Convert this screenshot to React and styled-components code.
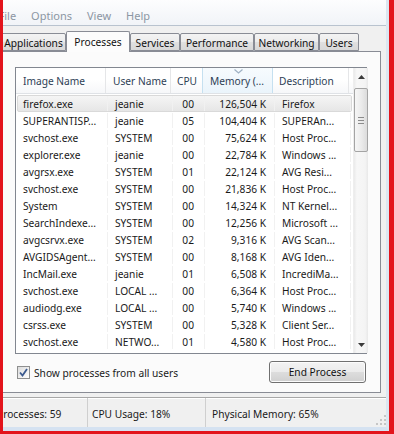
import React from 'react';
import styled, { createGlobalStyle } from 'styled-components';

const GlobalStyle = createGlobalStyle`
  html, body {
    margin: 0;
    padding: 0;
    background: #ffffff;
  }
  body {
    font-family: "Noto Sans", "Open Sans", sans-serif;
    font-size: 10.2px;
    color: #1a1a1a;
  }
`;

const processes = [
  ['firefox.exe', 'jeanie', '00', '126,504 K', 'Firefox'],
  ['SUPERANTISP...', 'jeanie', '05', '104,404 K', 'SUPERAn...'],
  ['svchost.exe', 'SYSTEM', '00', '75,624 K', 'Host Proc...'],
  ['explorer.exe', 'jeanie', '00', '22,784 K', 'Windows ...'],
  ['avgrsx.exe', 'SYSTEM', '01', '22,124 K', 'AVG Resi...'],
  ['svchost.exe', 'SYSTEM', '00', '21,836 K', 'Host Proc...'],
  ['System', 'SYSTEM', '00', '14,324 K', 'NT Kernel...'],
  ['SearchIndexe...', 'SYSTEM', '00', '12,256 K', 'Microsoft ...'],
  ['avgcsrvx.exe', 'SYSTEM', '02', '9,316 K', 'AVG Scan...'],
  ['AVGIDSAgent...', 'SYSTEM', '00', '8,168 K', 'AVG Iden...'],
  ['IncMail.exe', 'jeanie', '01', '6,508 K', 'IncrediMa...'],
  ['svchost.exe', 'LOCAL ...', '00', '6,364 K', 'Host Proc...'],
  ['audiodg.exe', 'LOCAL ...', '00', '5,740 K', 'Windows ...'],
  ['csrss.exe', 'SYSTEM', '00', '5,328 K', 'Client Ser...'],
  ['svchost.exe', 'NETWO...', '01', '4,580 K', 'Host Proc...'],
];

const tabs = [
  { label: 'Applications', width: 65 },
  { label: 'Processes', width: 64, active: true },
  { label: 'Services', width: 50 },
  { label: 'Performance', width: 74 },
  { label: 'Networking', width: 65 },
  { label: 'Users', width: 40 },
];

const COLS = '90px 65px 32px 70px 76px';

const Window = styled.div`
  width: 394px;
  height: 434px;
  box-sizing: border-box;
  border-left: 3px solid #e3141c;
  border-right: 5px solid #e3141c;
  border-bottom: 3px solid #e3141c;
`;

const Client = styled.div`
  height: 100%;
  box-sizing: border-box;
  background: #f0f0f0;
  border-right: 3px solid #dce6f1;
  border-bottom: 4px solid #d5e2f1;
  display: flex;
  flex-direction: column;
  overflow: hidden;
`;

const MenuBar = styled.div`
  height: 26px;
  box-sizing: border-box;
  padding-top: 6px;
  padding-left: 0;
  display: flex;
  align-items: center;
  gap: 15px;
  background: linear-gradient(#fdfdfe, #f1f4f8);
  border-bottom: 1px solid #b9c3cf;
  font-size: 11px;
  color: #8c96a3;
`;

const MenuItem = styled.span`
  margin-left: ${p => (p.first ? '-4.5px' : '0')};
`;

const Body = styled.div`
  margin-left: -2px;
  padding-top: 5px;
  height: 371px;
  box-sizing: border-box;
`;

const TabStrip = styled.div`
  height: 20px;
  display: flex;
  align-items: flex-end;
`;

const Tab = styled.div`
  box-sizing: border-box;
  width: ${p => p.w}px;
  height: ${p => (p.active ? 21 : 18)}px;
  margin-bottom: ${p => (p.active ? -1 : 0)}px;
  position: relative;
  z-index: ${p => (p.active ? 2 : 1)};
  border: 1px solid #898c95;
  border-bottom: ${p => (p.active ? 'none' : '1px solid #898c95')};
  border-radius: 2px 2px 0 0;
  background: ${p =>
    p.active
      ? '#fcfcfc'
      : 'linear-gradient(#f3f3f3 0%, #ececec 50%, #e0e0e0 51%, #d8d8d8 100%)'};
  display: flex;
  align-items: center;
  justify-content: center;
  padding-top: ${p => (p.active ? 0 : 1)}px;
  color: #111;
`;

const Panel = styled.div`
  width: 380px;
  height: 342px;
  box-sizing: border-box;
  border: 1px solid #898c95;
  background: #fbfbfb;
  padding: 15px 13px 9px 13px;
  display: flex;
  flex-direction: column;
`;

const ListView = styled.div`
  height: 287px;
  box-sizing: border-box;
  border: 1px solid #828790;
  background: #ffffff;
  display: flex;
`;

const ListMain = styled.div`
  flex: 1;
  display: flex;
  flex-direction: column;
`;

const Header = styled.div`
  height: 26px;
  box-sizing: border-box;
  display: grid;
  grid-template-columns: ${COLS};
  background: linear-gradient(#ffffff 0%, #ffffff 45%, #f6f7f9 100%);
  border-bottom: 1px solid #dfe2e6;
  color: #2e3e55;
`;

const HeadCell = styled.div`
  position: relative;
  display: flex;
  align-items: center;
  box-sizing: border-box;
  padding-left: ${p => p.pl ?? 7}px;
  padding-top: 1px;
  white-space: nowrap;
  overflow: hidden;
  border-right: 1px solid ${p => (p.sorted ? '#c5e0f0' : '#e5e6e8')};
  border-left: ${p => (p.sorted ? '1px solid #c5e0f0' : 'none')};
  margin-left: ${p => (p.sorted ? -1 : 0)}px;
  background: ${p => (p.sorted ? 'linear-gradient(#f7fbfe, #eaf4fb)' : 'transparent')};
`;

const SortArrow = styled.svg`
  position: absolute;
  top: 1px;
  left: 31px;
`;

const Rows = styled.div`
  flex: 1;
  padding-top: 1px;
`;

const Row = styled.div`
  height: 17px;
  box-sizing: border-box;
  display: grid;
  grid-template-columns: ${COLS};
  align-items: center;
  margin: 0 1px;
  border-radius: 2px;
  border: 1px solid ${p => (p.selected ? '#d9d9d9' : 'transparent')};
  background: ${p => (p.selected ? 'linear-gradient(#f5f5f5, #e6e6e6)' : 'transparent')};
  & > div:first-child {
    margin-left: -2px;
  }
`;

const Cell = styled.div`
  height: 100%;
  box-sizing: border-box;
  display: flex;
  align-items: center;
  justify-content: ${p => (p.right ? 'flex-end' : 'flex-start')};
  padding-left: ${p => (p.right ? 0 : 7)}px;
  padding-right: ${p => p.pr ?? 0}px;
  white-space: nowrap;
  overflow: hidden;
  border-right: 1px solid #f1f1f1;
`;

const ScrollBar = styled.div`
  width: 17px;
  display: flex;
  flex-direction: column;
  background: linear-gradient(90deg, #eaeaea 0%, #f7f7f7 20%, #f4f4f4 80%, #e8e8e8 100%);
  border-left: 1px solid #eeeeee;
  box-sizing: border-box;
`;

const ArrowButton = styled.div`
  height: 17px;
  display: flex;
  align-items: center;
  justify-content: center;
`;

const Track = styled.div`
  flex: 1;
  padding-top: 3px;
  display: flex;
  justify-content: center;
`;

const Thumb = styled.div`
  width: 14px;
  height: 64px;
  box-sizing: border-box;
  border: 1px solid #a4a4a4;
  border-radius: 2px;
  background: linear-gradient(90deg, #f6f6f6 0%, #ececec 50%, #dcdcdc 100%);
  display: flex;
  flex-direction: column;
  align-items: center;
  justify-content: center;
  gap: 2px;
`;

const GripLine = styled.div`
  width: 6px;
  height: 1px;
  background: #8b8b8b;
`;

const Footer = styled.div`
  margin-top: 7px;
  height: 22px;
  display: flex;
  align-items: center;
  justify-content: space-between;
`;

const CheckLabel = styled.label`
  display: flex;
  align-items: center;
  gap: 4px;
  margin-left: 2px;
  margin-top: 1px;
  color: #1a1a1a;
`;

const CheckBox = styled.span`
  width: 13px;
  height: 13px;
  box-sizing: border-box;
  border: 1px solid #8e8f8f;
  background: linear-gradient(135deg, #dcdcdc, #ffffff);
  display: flex;
  align-items: center;
  justify-content: center;
`;

const Button = styled.button`
  width: 97px;
  height: 22px;
  margin-right: 1px;
  box-sizing: border-box;
  border: 1px solid #707070;
  border-radius: 3px;
  background: linear-gradient(#f3f3f3 0%, #ebebeb 50%, #dddddd 51%, #d0d0d0 100%);
  box-shadow: inset 0 0 0 1px #fcfcfc;
  font-family: inherit;
  font-size: 10.2px;
  color: #111;
  padding: 0;
`;

const StatusBar = styled.div`
  height: 30px;
  box-sizing: border-box;
  border-top: 1px solid #a7a7a7;
  box-shadow: inset 0 1px 0 #ffffff;
  display: flex;
  align-items: stretch;
  position: relative;
  color: #1a1a1a;
`;

const StatusCell = styled.div`
  width: ${p => p.w}px;
  box-sizing: border-box;
  padding-left: ${p => p.pl}px;
  padding-top: 3px;
  display: flex;
  align-items: center;
  white-space: nowrap;
  border-right: ${p => (p.last ? 'none' : '1px solid #cfcfcf')};
  text-indent: ${p => p.indent ?? 0}px;
`;

const Gripper = styled.svg`
  position: absolute;
  right: 0;
  bottom: 2px;
`;

function App() {
  return (
    <>
      <GlobalStyle />
      <Window>
        <Client>
          <MenuBar>
            <MenuItem first>File</MenuItem>
            <MenuItem>Options</MenuItem>
            <MenuItem>View</MenuItem>
            <MenuItem>Help</MenuItem>
          </MenuBar>

          <Body>
            <TabStrip>
              {tabs.map(t => (
                <Tab key={t.label} w={t.width} active={t.active}>
                  {t.label}
                </Tab>
              ))}
            </TabStrip>

            <Panel>
              <ListView>
                <ListMain>
                  <Header>
                    <HeadCell>Image Name</HeadCell>
                    <HeadCell>User Name</HeadCell>
                    <HeadCell pl={6}>CPU</HeadCell>
                    <HeadCell sorted pl={7}>
                      <SortArrow width="9" height="5" viewBox="0 0 9 5">
                        <path d="M0.5 0.5 L4.5 4 L8.5 0.5" fill="none" stroke="#9fb1c4" strokeWidth="1.2" />
                      </SortArrow>
                      Memory (...
                    </HeadCell>
                    <HeadCell pl={6}>Description</HeadCell>
                  </Header>
                  <Rows>
                    {processes.map((p, i) => (
                      <Row key={i} selected={i === 0}>
                        <Cell>{p[0]}</Cell>
                        <Cell>{p[1]}</Cell>
                        <Cell right pr={10}>{p[2]}</Cell>
                        <Cell right pr={8}>{p[3]}</Cell>
                        <Cell>{p[4]}</Cell>
                      </Row>
                    ))}
                  </Rows>
                </ListMain>
                <ScrollBar>
                  <ArrowButton>
                    <svg width="7" height="4" viewBox="0 0 7 4">
                      <path d="M0 4 L3.5 0 L7 4 Z" fill="#3a3a3a" />
                    </svg>
                  </ArrowButton>
                  <Track>
                    <Thumb>
                      <GripLine />
                      <GripLine />
                      <GripLine />
                    </Thumb>
                  </Track>
                  <ArrowButton>
                    <svg width="7" height="4" viewBox="0 0 7 4">
                      <path d="M0 0 L3.5 4 L7 0 Z" fill="#3a3a3a" />
                    </svg>
                  </ArrowButton>
                </ScrollBar>
              </ListView>

              <Footer>
                <CheckLabel>
                  <CheckBox>
                    <svg width="9" height="9" viewBox="0 0 9 9">
                      <path d="M1 4.5 L3.5 7.5 L8 1" fill="none" stroke="#3b5a8f" strokeWidth="1.8" />
                    </svg>
                  </CheckBox>
                  Show processes from all users
                </CheckLabel>
                <Button>End Process</Button>
              </Footer>
            </Panel>
          </Body>

          <StatusBar>
            <StatusCell w={85} pl={0} indent={-6}>Processes: 59</StatusCell>
            <StatusCell w={118} pl={4}>CPU Usage: 18%</StatusCell>
            <StatusCell w={180} pl={6} last>Physical Memory: 65%</StatusCell>
            <Gripper width="11" height="11" viewBox="0 0 11 11">
              {[[9, 1], [9, 5], [5, 5], [9, 9], [5, 9], [1, 9]].map(([x, y], i) => (
                <rect key={i} x={x} y={y} width="2" height="2" fill="#c6c6c6" />
              ))}
            </Gripper>
          </StatusBar>
        </Client>
      </Window>
    </>
  );
}

export default App;
